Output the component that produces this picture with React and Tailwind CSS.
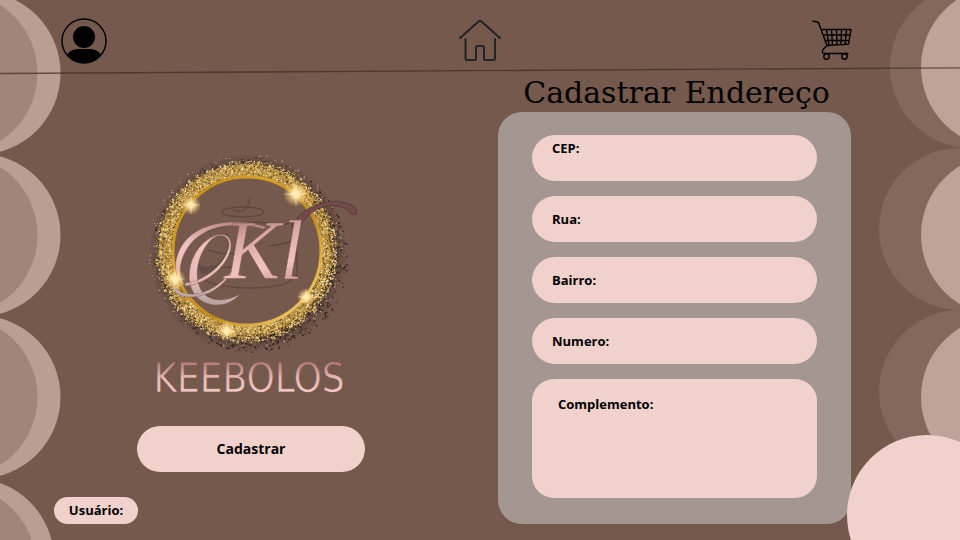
import React from "react";

const GOLD = ["#fff3c4", "#e9c25a", "#d0a044", "#8a6a30", "#f5e0a0", "#5f4826", "#e0bd72"];

function makeRandom(seed) {
  let s = seed;
  return () => {
    s = (s * 16807) % 2147483647;
    return s / 2147483647;
  };
}

function dot(x, y, r) {
  return `M${x.toFixed(1)} ${y.toFixed(1)}h${r.toFixed(1)}v${r.toFixed(1)}h-${r.toFixed(1)}z`;
}

function buildGlitter() {
  const rand = makeRandom(4711);
  const gold = GOLD.map(() => "");
  let dark = "";
  let pale = "";
  for (let i = 0; i < 4200; i++) {
    const a = rand() * Math.PI * 2;
    const d = 75 + Math.pow(rand(), 1.2) * 16;
    const k = Math.floor(rand() * GOLD.length);
    gold[k] += dot(245 + Math.cos(a) * d, 251 + Math.sin(a) * d, 0.7 + rand() * 0.9);
  }
  for (let i = 0; i < 1500; i++) {
    const a = rand() * Math.PI * 2;
    const lean = Math.max(0, Math.cos(a - 0.8));
    const d = 84 + Math.pow(rand(), 2) * (11 + lean * 9);
    if (rand() < 0.25 + lean * 0.75) {
      dark += dot(245 + Math.cos(a) * d, 251 + Math.sin(a) * d, 0.8 + rand());
    }
  }
  for (let i = 0; i < 260; i++) {
    const a = rand() * Math.PI * 2;
    const d = 86 + rand() * 12;
    pale += dot(245 + Math.cos(a) * d, 251 + Math.sin(a) * d, 0.6 + rand() * 0.7);
  }
  return { gold, dark, pale };
}

const glitter = buildGlitter();

const SPARKS = [
  [295, 194, 13],
  [190, 205, 10],
  [174, 279, 11],
  [305, 297, 9],
  [226, 331, 10],
];

function Logo() {
  return (
    <svg viewBox="130 140 240 265" className="h-[265px] w-[240px]" role="img" aria-label="Keebolos">
      <defs>
        <linearGradient id="rose" x1="0" y1="0" x2="0.2" y2="1">
          <stop offset="0.15" stopColor="#a8736f" />
          <stop offset="0.4" stopColor="#d9a7a2" />
          <stop offset="0.75" stopColor="#f1c3bf" />
          <stop offset="1" stopColor="#c99591" />
        </linearGradient>
        <linearGradient id="swirl" gradientUnits="userSpaceOnUse" x1="230" y1="220" x2="215" y2="308">
          <stop offset="0" stopColor="#b98781" />
          <stop offset="0.35" stopColor="#efc3be" />
          <stop offset="0.75" stopColor="#e6b8b3" />
          <stop offset="1" stopColor="#aaa09f" />
        </linearGradient>
        <linearGradient id="word" x1="0" y1="0" x2="0" y2="1">
          <stop offset="0.1" stopColor="#a26f6c" />
          <stop offset="0.5" stopColor="#e9b9b5" />
          <stop offset="0.8" stopColor="#f0c6c2" />
        </linearGradient>
        <linearGradient id="band" x1="0" y1="0" x2="1" y2="1">
          <stop offset="0" stopColor="#b87d16" />
          <stop offset="0.3" stopColor="#d9a229" />
          <stop offset="0.6" stopColor="#c28a1c" />
          <stop offset="1" stopColor="#ffe27a" />
        </linearGradient>
        <radialGradient id="spark">
          <stop offset="0" stopColor="#fffdf0" />
          <stop offset="0.25" stopColor="#ffeeb0" stopOpacity="0.95" />
          <stop offset="1" stopColor="#f3bb55" stopOpacity="0" />
        </radialGradient>
        <radialGradient id="shade">
          <stop offset="0.8" stopColor="#1e130d" stopOpacity="0.5" />
          <stop offset="1" stopColor="#1e130d" stopOpacity="0" />
        </radialGradient>
        <mask id="hole">
          <rect x="100" y="100" width="300" height="300" fill="white" />
          <circle cx="246" cy="251" r="73" fill="black" />
        </mask>
      </defs>

      <g mask="url(#hole)">
        <circle cx="247" cy="253" r="99" fill="url(#shade)" />
        <circle cx="245" cy="251" r="81" fill="none" stroke="#b48b40" strokeWidth="12" />
      </g>
      <path d={glitter.dark} fill="#19120e" opacity="0.7" />
      {glitter.gold.map((d, i) => (
        <path key={GOLD[i]} d={d} fill={GOLD[i]} />
      ))}
      <path d={glitter.pale} fill="#d3c29a" opacity="0.75" />
      <circle cx="246" cy="251" r="74" fill="none" stroke="url(#band)" strokeWidth="3" />

      <g fill="none" stroke="#59423b" strokeWidth="1.5" opacity="0.7">
        <ellipse cx="242" cy="212" rx="21" ry="5" />
        <path d="M232 210Q243 214 246 207T249 198" />
        <path d="M204 232Q242 217 281 225L296 221V274Q290 288 250 288Q215 288 203 279M207 250Q226 257 242 252M209 266Q224 270 240 265M268 246Q284 244 295 240" />
      </g>

      <path d="M224 233Q232 237 229 250C224 270 201 281 198 270C192 288 203 294 213 298C192 296 187 279 196 262C206 274 224 263 227 247Z" fill="#5e4a48" opacity="0.75" />
      <g fill="url(#swirl)" stroke="#7b5853" strokeWidth="0.4">
        <path d="M265 227C238 218 204 221 187 238C171 254 171 278 184 286C174 272 181 252 193 240C210 224 238 222 263 229Z" />
        <path d="M184 286C209 284 230 261 230 245C230 232 217 232 206 240C185 256 183 287 198 299C211 309 229 306 239 294C222 304 205 301 199 288C192 271 199 250 211 239C220 232 228 236 228 245C227 260 207 281 184 283Z" />
        <path d="M170 281C175 293 188 297 203 292C218 287 230 274 238 260C230 276 218 291 202 295C185 300 171 296 170 281Z" />
      </g>
      <path d="M290 226C302 207 322 199 341 202C351 204 356 208 356 212Q355 216 350 214C346 207 337 205 327 206C313 208 304 217 297 229Z" fill="#73494a" stroke="#4b3331" strokeWidth="0.7" />
      <text x="223" y="279" fill="url(#rose)" stroke="#7b5853" strokeWidth="0.4" className="font-['Liberation_Serif',serif] text-[84px] font-normal italic">Kl</text>

      {SPARKS.map(([x, y, r]) => (
        <g key={x}>
          <circle cx={x} cy={y} r={r} fill="url(#spark)" />
          <path d={`M${x - r} ${y}L${x} ${y - 1}L${x + r} ${y}L${x} ${y + 1}ZM${x} ${y - r}L${x + 1} ${y}L${x} ${y + r}L${x - 1} ${y}Z`} fill="#ffe9ad" />
        </g>
      ))}

      <text x="248" y="392" textAnchor="middle" fill="url(#word)" stroke="#694744" strokeWidth="0.5" className="font-['DejaVu_Sans_Condensed','DejaVu_Sans',sans-serif] text-[40px] font-normal">KEEBOLOS</text>
    </svg>
  );
}

function UserIcon() {
  return (
    <svg viewBox="0 0 46 46" className="size-[46px]" aria-hidden="true">
      <defs>
        <clipPath id="face">
          <circle cx="23" cy="23" r="22" />
        </clipPath>
      </defs>
      <circle cx="23" cy="23" r="22" fill="none" stroke="#000" strokeWidth="1.4" />
      <circle cx="23" cy="19" r="11" />
      <path clipPath="url(#face)" d="M4 46V39Q9 31 17 31H29Q37 31 42 39V46Z" />
    </svg>
  );
}

function HomeIcon() {
  return (
    <svg viewBox="0 0 44 44" className="size-[44px]" fill="none" stroke="#262324" strokeWidth="2" strokeLinecap="round" strokeLinejoin="round" aria-hidden="true">
      <path d="M2 19L20.500 2.500Q22 1.300 23.500 2.500L42 19" />
      <path d="M7.500 20V39.500Q7.500 41 9 41H16.500Q18 41 18 39.500V29Q18 27 20 27H24Q26 27 26 29V39.500Q26 41 27.500 41H35.500Q37 41 37 39.500V20" />
    </svg>
  );
}

function CartIcon() {
  return (
    <svg viewBox="0 0 42 42" className="size-[42px]" fill="none" stroke="#000" strokeWidth="1.4" strokeLinecap="round" strokeLinejoin="round" aria-hidden="true">
      <path d="M2 1L7.500 2.500L16 25.500L12 29.500Q10 33.500 14 33.500H37" />
      <path d="M10.500 9.500H40L37.500 24L16 25.500M12.500 15H39M14.500 20.500H38M15.500 9.500L18 25.500M20.500 9.500L21.500 25M25.500 9.500L26 25M30.500 9.500L30 24.500M35.500 9.500L34 24.500" />
      <circle cx="15.500" cy="36.500" r="2.700" />
      <circle cx="33.500" cy="36.500" r="2.700" />
    </svg>
  );
}

function Backdrop() {
  return (
    <>
      <svg viewBox="0 0 61 540" className="absolute top-0 left-0 h-[540px] w-[61px]" aria-hidden="true">
        {[73, 235, 397].map((y) => (
          <g key={y}>
            <circle cx="-21" cy={y} r="81.500" fill="#ba9d93" />
            <circle cx="-43" cy={y} r="80.500" fill="#a1857a" />
          </g>
        ))}
        <circle cx="-28" cy="560" r="82" fill="#ba9d93" />
        <circle cx="-45" cy="566" r="81" fill="#a1857a" />
      </svg>
      <svg viewBox="879 0 81 540" className="absolute top-0 right-0 h-[540px] w-[81px]" aria-hidden="true">
        <circle cx="971" cy="67" r="81" fill="#84685c" />
        <circle cx="960" cy="229" r="81" fill="#84685c" />
        <circle cx="960" cy="391" r="81" fill="#84685c" />
        {[67, 235, 397].map((y) => (
          <circle key={y} cx="1002" cy={y} r="81" fill="#bfa298" />
        ))}
      </svg>
      <svg viewBox="0 0 960 8" preserveAspectRatio="none" className="absolute top-[67px] left-0 h-2 w-full" aria-hidden="true">
        <path d="M0 6.500L960 0.800" stroke="#402b25" strokeOpacity="0.7" strokeWidth="1.300" />
      </svg>
    </>
  );
}

const FIELDS = [
  { id: "cep", label: "CEP:", align: "items-start pt-1" },
  { id: "rua", label: "Rua:", align: "items-center" },
  { id: "bairro", label: "Bairro:", align: "items-center" },
  { id: "numero", label: "Numero:", align: "items-center" },
];

export default function App() {
  return (
    <div className="relative flex min-h-screen flex-col overflow-hidden bg-[#75594d] font-['Open_Sans','Noto_Sans',sans-serif] text-sm font-bold text-black">
      <Backdrop />
      <header className="relative grid h-[70px] grid-cols-3 items-center px-[61px] pt-3">
        <button type="button" aria-label="Perfil" className="justify-self-start">
          <UserIcon />
        </button>
        <button type="button" aria-label="Início" className="justify-self-center">
          <HomeIcon />
        </button>
        <button type="button" aria-label="Carrinho" className="mr-[46px] justify-self-end">
          <CartIcon />
        </button>
      </header>

      <main className="relative grid flex-1 grid-cols-[498fr_353fr] pr-[109px] pb-4">
        <section className="flex min-w-0 flex-col items-center pt-[70px] pl-1">
          <Logo />
          <button type="submit" form="endereco" className="mt-[21px] h-[46px] w-[228px] rounded-full bg-[#f0d1cc]">
            Cadastrar
          </button>
          <p className="mt-[25px] ml-[50px] flex h-[27px] w-[84px] items-center justify-center self-start rounded-full bg-[#f0d1cc] text-[13px]">
            Usuário:
          </p>
        </section>

        <section className="min-w-0">
          <h1 className="h-[42px] pl-1 text-center font-['DejaVu_Serif',serif] text-[30px] leading-[46px] font-normal whitespace-nowrap">
            Cadastrar Endereço
          </h1>
          <form id="endereco" className="flex flex-col gap-[15px] rounded-[24px] bg-[#a49690] px-[34px] pt-[23px] pb-[26px] text-[13px]">
            {FIELDS.map((f) => (
              <div key={f.id} className={`flex h-[46px] gap-2 rounded-full bg-[#f0d1cc] px-5 ${f.align}`}>
                <label htmlFor={f.id}>{f.label}</label>
                <input id={f.id} type="text" className="min-w-0 flex-1 bg-transparent outline-none" />
              </div>
            ))}
            <div className="flex h-[119px] gap-2 rounded-[22px] bg-[#f0d1cc] px-[26px] pt-4">
              <label htmlFor="complemento">Complemento:</label>
              <textarea id="complemento" className="min-w-0 flex-1 resize-none bg-transparent outline-none" />
            </div>
          </form>
        </section>
      </main>

      <div className="absolute -right-[47px] -bottom-[55px] size-40 rounded-full bg-[#f0d1cc]" />
    </div>
  );
}
